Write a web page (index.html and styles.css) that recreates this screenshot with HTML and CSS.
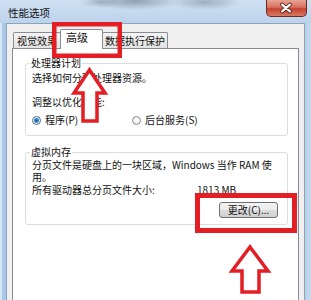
FILE: index.html
```html
<!DOCTYPE html>
<html lang="zh-CN">
<head>
<meta charset="utf-8">
<title>性能选项</title>
<link rel="stylesheet" href="styles.css">
</head>
<body>
<div class="win">
  <div class="titlebar">
    <span class="title">性能选项</span>
    <div class="close">
      <svg width="41" height="17" viewBox="0 0 41 17">
        <path d="M16.5 4.5 L24.5 11.5 M24.5 4.5 L16.5 11.5" stroke="#5a1e18" stroke-width="4" stroke-linecap="round"/>
        <path d="M16.5 4.5 L24.5 11.5 M24.5 4.5 L16.5 11.5" stroke="#ffffff" stroke-width="2.2" stroke-linecap="round"/>
      </svg>
    </div>
  </div>
  <div class="body">
    <div class="tabs">
      <div class="tab t1">视觉效果</div>
      <div class="tab sel">高级</div>
      <div class="tab t3">数据执行保护</div>
    </div>
    <div class="panel">
      <fieldset class="group g1">
        <legend>处理器计划</legend>
        <p class="line first">选择如何分配处理器资源。</p>
        <p class="line l2">调整以优化性能:</p>
        <div class="radios">
          <label class="radio r1"><span class="dot on"></span>程序(P)</label>
          <label class="radio"><span class="dot"></span>后台服务(S)</label>
        </div>
      </fieldset>
      <fieldset class="group g2">
        <legend>虚拟内存</legend>
        <p class="line v1">分页文件是硬盘上的一块区域，Windows 当作 RAM 使</p>
        <p class="line">用。</p>
        <div class="size"><span class="lbl">所有驱动器总分页文件大小:</span><span>1813 MB</span></div>
        <div class="btnrow"><button class="btn">更改(C)...</button></div>
      </fieldset>
    </div>
  </div>
  <svg class="marks" width="311" height="300" viewBox="0 0 311 300">
    <rect x="54.25" y="24.25" width="65.5" height="31.5" fill="none" stroke="#e31e24" stroke-width="4.5"/>
    <rect x="197.5" y="195.5" width="97" height="35" fill="none" stroke="#e31e24" stroke-width="5"/>
    <polygon points="89.5,70 105,93 97,93 97,121 83,121 83,93 74,93" fill="#ffffff" stroke="#e31e24" stroke-width="3.5" stroke-linejoin="miter"/>
    <polygon points="250,247 268,271 259,271 259,292 242,292 242,271 232,271" fill="#ffffff" stroke="#e31e24" stroke-width="3.5" stroke-linejoin="miter"/>
  </svg>
</div>
</body>
</html>
```

FILE: styles.css
```css
html, body {
  margin: 0;
  padding: 0;
}

body {
  width: 311px;
  height: 300px;
  overflow: hidden;
  font-family: "Noto Sans CJK SC", "Noto Sans", sans-serif;
  font-size: 10px;
  line-height: 12px;
  color: #111;
}

.win {
  position: relative;
  width: 311px;
  height: 300px;
  display: flex;
  flex-direction: column;
  background: linear-gradient(to right, #d6e6f5 0, #d6e6f5 2px, #a9c7e6 2px, #a9c7e6 305px, #b6cfe9 305px, #c6dbf0 311px);
}

.titlebar {
  height: 23px;
  flex: none;
  display: flex;
  justify-content: space-between;
  align-items: flex-start;
  padding: 0 4px 0 8px;
  background:
    radial-gradient(ellipse 45px 9px at 135px 1px, rgba(70, 80, 100, 0.45), rgba(70, 80, 100, 0)),
    radial-gradient(ellipse 35px 8px at 205px 2px, rgba(70, 80, 100, 0.35), rgba(70, 80, 100, 0)),
    radial-gradient(ellipse 20px 6px at 100px 2px, rgba(90, 100, 120, 0.3), rgba(90, 100, 120, 0)),
    linear-gradient(#cfe0f2, #bcd3ec);
}

.title {
  margin-top: 7px;
  font-size: 10.5px;
  line-height: 12px;
  color: #111;
}

.close {
  width: 41px;
  height: 17px;
  box-sizing: border-box;
  border: 1px solid #6d2a22;
  border-top: none;
  border-radius: 0 0 5px 5px;
  background: linear-gradient(#e9a594 0, #d7705f 45%, #c5412f 55%, #d97a63 100%);
  display: flex;
}

.close svg {
  margin-left: -1px;
}

.body {
  flex: 1;
  display: flex;
  flex-direction: column;
  margin: 0 6px;
  padding: 5px 5px 0 5px;
  background: #f0f0f0;
  border: 1px solid #8ea2b8;
  border-bottom: none;
}

.tabs {
  height: 19px;
  display: flex;
  align-items: flex-end;
  padding-left: 1px;
}

.tab {
  height: 15px;
  line-height: 15px;
  border: 1px solid #898c95;
  border-bottom: none;
  border-radius: 2px 2px 0 0;
  background: linear-gradient(#f4f4f4, #e4e4e4);
  text-align: center;
  color: #111;
}

.t1 {
  width: 46px;
}

.sel {
  position: relative;
  z-index: 1;
  box-sizing: border-box;
  width: 43px;
  height: 20px;
  line-height: 14px;
  margin-left: -1px;
  margin-bottom: -1px;
  background: #fff;
  text-align: left;
  padding-left: 5px;
  font-size: 11px;
}

.t3 {
  width: 64px;
  margin-left: -1px;
}

.panel {
  flex: 1;
  background: #fff;
  border: 1px solid #898c95;
  border-bottom: none;
  padding: 8px 10px 0 12px;
}

.group {
  margin: 0;
  min-width: 0;
  border: 1px solid #d5dfe5;
  border-radius: 3px;
  padding: 0 6px 9px 6px;
}

.group legend {
  padding: 0 1px;
  margin-left: -2px;
  line-height: 12px;
  font-size: 10px;
}

.line {
  margin: 0;
  white-space: nowrap;
}

.first {
  margin-top: 3px;
}

.l2 {
  margin-top: 12px;
}

.radios {
  margin-top: 6px;
  display: flex;
}

.radio {
  display: flex;
  align-items: center;
  gap: 4px;
}

.r1 {
  width: 100px;
}

.dot {
  width: 9px;
  height: 9px;
  box-sizing: border-box;
  border-radius: 50%;
  border: 1px solid #8b8b8b;
  background: radial-gradient(circle at 50% 40%, #ffffff 0, #e6e6e6 100%);
}

.dot.on {
  border-color: #4d6f92;
  background: radial-gradient(circle at 50% 50%, #1d5a98 0, #3c8ad0 2px, #eef3f8 3px);
}

.g2 {
  margin-top: 10px;
  padding-bottom: 6px;
}

.v1 {
  margin-top: 1px;
}

.size {
  margin-top: 1px;
  display: flex;
  white-space: nowrap;
}

.lbl {
  width: 165px;
}

.btnrow {
  margin-top: 6px;
  display: flex;
  justify-content: flex-end;
  padding-right: 3px;
}

.btn {
  width: 59px;
  height: 16px;
  padding: 0;
  border: 1px solid #707070;
  border-radius: 3px;
  background: linear-gradient(#f3f3f3 0, #ebebeb 50%, #dddddd 51%, #cfcfcf 100%);
  font-family: "Noto Sans CJK SC", "Noto Sans", sans-serif;
  font-size: 10px;
  line-height: 14px;
  color: #111;
}

.marks {
  position: absolute;
  left: 0;
  top: 0;
  pointer-events: none;
}
```
